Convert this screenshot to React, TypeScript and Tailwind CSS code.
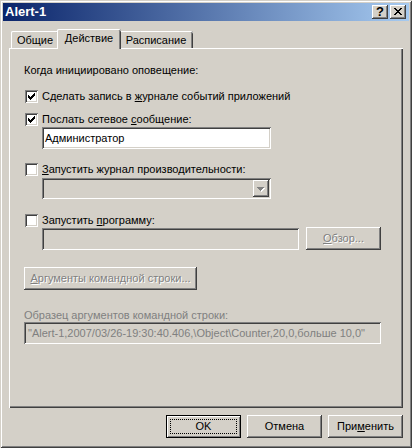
import React from "react";

const raised =
  "shadow-[inset_-1px_-1px_0_#404040,inset_1px_1px_0_#ffffff,inset_-2px_-2px_0_#808080,inset_2px_2px_0_#d4d0c8]";
const sunken =
  "shadow-[inset_1px_1px_0_#808080,inset_-1px_-1px_0_#ffffff,inset_2px_2px_0_#404040,inset_-2px_-2px_0_#d4d0c8]";

function Pixels({ rows, color, w, h }: { rows: [number, number, number][]; color: string; w: number; h: number }) {
  return (
    <svg width={w} height={h} viewBox={`0 0 ${w} ${h}`} shapeRendering="crispEdges" className="block">
      {rows.map(([x, y, l], i) => (
        <rect key={i} x={x} y={y} width={l} height={1} fill={color} />
      ))}
    </svg>
  );
}

const checkRows: [number, number, number][] = [
  [9, 3, 1],
  [8, 4, 2],
  [3, 5, 1],
  [7, 5, 3],
  [3, 6, 2],
  [6, 6, 3],
  [3, 7, 5],
  [4, 8, 3],
  [5, 9, 1],
];

function Check({ checked }: { checked?: boolean }) {
  return (
    <div className={"w-[13px] h-[13px] bg-white shrink-0 " + sunken}>
      {checked && <Pixels rows={checkRows} color="#000" w={13} h={13} />}
    </div>
  );
}

const xRows: [number, number, number][] = [
  [4, 3, 2],
  [10, 3, 2],
  [5, 4, 2],
  [9, 4, 2],
  [6, 5, 4],
  [7, 6, 2],
  [6, 7, 4],
  [5, 8, 2],
  [9, 8, 2],
  [4, 9, 2],
  [10, 9, 2],
];

function TitleBtn({ children }: { children: React.ReactNode }) {
  return (
    <div className={"w-[16px] h-[14px] bg-[#d4d0c8] flex items-center justify-center " + raised}>
      {children}
    </div>
  );
}

function Btn({
  children,
  disabled,
  w = "w-[75px]",
}: {
  children: React.ReactNode;
  disabled?: boolean;
  w?: string;
}) {
  return (
    <div
      className={
        w +
        " h-[23px] shrink-0 flex items-center justify-center " +
        raised +
        (disabled ? " text-[#808080] [text-shadow:1px_1px_0_#ffffff]" : "")
      }
    >
      <span>{children}</span>
    </div>
  );
}

const arrowRows: [number, number, number][] = [
  [4, 7, 7],
  [5, 8, 5],
  [6, 9, 3],
  [7, 10, 1],
];
const arrowShadow: [number, number, number][] = [
  [5, 8, 7],
  [6, 9, 5],
  [7, 10, 3],
  [8, 11, 1],
];

export default function App() {
  return (
    <div className="w-[412px] h-[448px] bg-[#d4d0c8] p-[3px] flex flex-col font-['Liberation_Sans',Arial,sans-serif] text-[11px] leading-[13px] text-black shadow-[inset_1px_1px_0_#d4d0c8,inset_-1px_-1px_0_#404040,inset_2px_2px_0_#ffffff,inset_-2px_-2px_0_#808080] select-none">
      {/* Title bar */}
      <div className="h-[18px] shrink-0 flex items-center bg-[linear-gradient(to_right,#0a246a,#a6caf0)] pl-[2px] pr-[3px]">
        <span className="font-bold text-white text-[13px] leading-[14px]">Alert-1</span>
        <div className="ml-auto flex gap-[2px]">
          <TitleBtn>
            <span className="font-bold text-[13px] leading-[12px] text-black">?</span>
          </TitleBtn>
          <TitleBtn>
            <div className="w-[16px] h-[14px]">
              <Pixels rows={xRows} color="#000" w={16} h={14} />
            </div>
          </TitleBtn>
        </div>
      </div>

      {/* Tabs */}
      <div className="mt-[8px] h-[20px] shrink-0 flex items-end pl-[8px]">
        <div className="w-[48px] h-[18px] flex items-center justify-center pt-[1px] rounded-t-[2px] shadow-[inset_1px_0_0_#ffffff,inset_0_1px_0_#ffffff,inset_-1px_0_0_#404040,inset_-2px_0_0_#808080]">
          Общие
        </div>
        <div className="relative z-10 -mx-[2px] w-[64px] h-[20px] bg-[#d4d0c8] flex items-center justify-center pb-[1px] rounded-t-[2px] shadow-[inset_1px_0_0_#ffffff,inset_0_1px_0_#ffffff,inset_-1px_0_0_#404040,inset_-2px_0_0_#808080]">
          Действие
        </div>
        <div className="w-[74px] h-[18px] flex items-center justify-center pt-[1px] rounded-t-[2px] shadow-[inset_1px_0_0_#ffffff,inset_0_1px_0_#ffffff,inset_-1px_0_0_#404040,inset_-2px_0_0_#808080]">
          Расписание
        </div>
      </div>

      {/* Panel */}
      <div className="-mt-[1px] mx-[6px] h-[360px] shrink-0 flex flex-col pl-[15px] bg-[#d4d0c8] shadow-[inset_1px_1px_0_#ffffff,inset_-1px_-1px_0_#404040,inset_-2px_-2px_0_#808080]">
        <div className="mt-[15px] h-[14px] flex items-center">Когда инициировано оповещение:</div>

        <div className="mt-[13px] ml-[1px] h-[13px] flex items-center gap-[4px]">
          <Check checked />
          <span>
            Сделать запись в <u>ж</u>урнале событий приложений
          </span>
        </div>

        <div className="mt-[10px] ml-[1px] h-[13px] flex items-center gap-[4px]">
          <Check checked />
          <span>
            Послать сетевое <u>с</u>ообщение:
          </span>
        </div>

        <div className={"mt-[1px] ml-[18px] w-[229px] h-[22px] bg-white flex items-center pl-[3px] " + sunken}>
          Администратор
        </div>

        <div className="mt-[14px] ml-[1px] h-[13px] flex items-center gap-[4px]">
          <Check />
          <span>
            <u>З</u>апустить журнал производительности:
          </span>
        </div>

        <div className={"mt-[2px] ml-[18px] w-[229px] h-[21px] flex justify-end p-[2px] " + sunken}>
          <div className={"w-[16px] h-[17px] " + raised}>
            <svg width="16" height="17" viewBox="0 0 16 17" shapeRendering="crispEdges" className="block">
              {arrowShadow.map(([x, y, l], i) => (
                <rect key={"s" + i} x={x} y={y} width={l} height={1} fill="#ffffff" />
              ))}
              {arrowRows.map(([x, y, l], i) => (
                <rect key={i} x={x} y={y} width={l} height={1} fill="#808080" />
              ))}
            </svg>
          </div>
        </div>

        <div className="mt-[15px] ml-[1px] h-[13px] flex items-center gap-[4px]">
          <Check />
          <span>
            Запустить <u>п</u>рограмму:
          </span>
        </div>

        <div className="mt-[1px] ml-[18px] h-[22px] flex items-start gap-[7px]">
          <div className={"w-[257px] h-[22px] " + sunken}></div>
          <div className="-mt-[1px]">
            <Btn disabled>
              <u>О</u>бзор...
            </Btn>
          </div>
        </div>

        <div className="mt-[17px]">
          <Btn disabled w="w-[173px]">
            <u>А</u>ргументы командной строки...
          </Btn>
        </div>

        <div className="mt-[18px] h-[14px] flex items-center text-[#808080]">
          Образец аргументов командной строки:
        </div>

        <div className={"w-[357px] h-[22px] flex items-center pl-[4px] text-[#808080] " + sunken}>
          {'"Alert-1,2007/03/26-19:30:40.406,\\Object\\Counter,20,0,больше 10,0"'}
        </div>
      </div>

      {/* Bottom buttons */}
      <div className="mt-[7px] mr-[6px] h-[23px] shrink-0 flex justify-end gap-[6px]">
        <div className="w-[75px] h-[23px] border border-black p-[3px] shadow-[inset_1px_1px_0_#ffffff,inset_-1px_-1px_0_#808080]">
          <div className="w-full h-full border border-dotted border-black flex items-center justify-center">
            OK
          </div>
        </div>
        <Btn>Отмена</Btn>
        <Btn>
          При<u>м</u>енить
        </Btn>
      </div>
    </div>
  );
}
